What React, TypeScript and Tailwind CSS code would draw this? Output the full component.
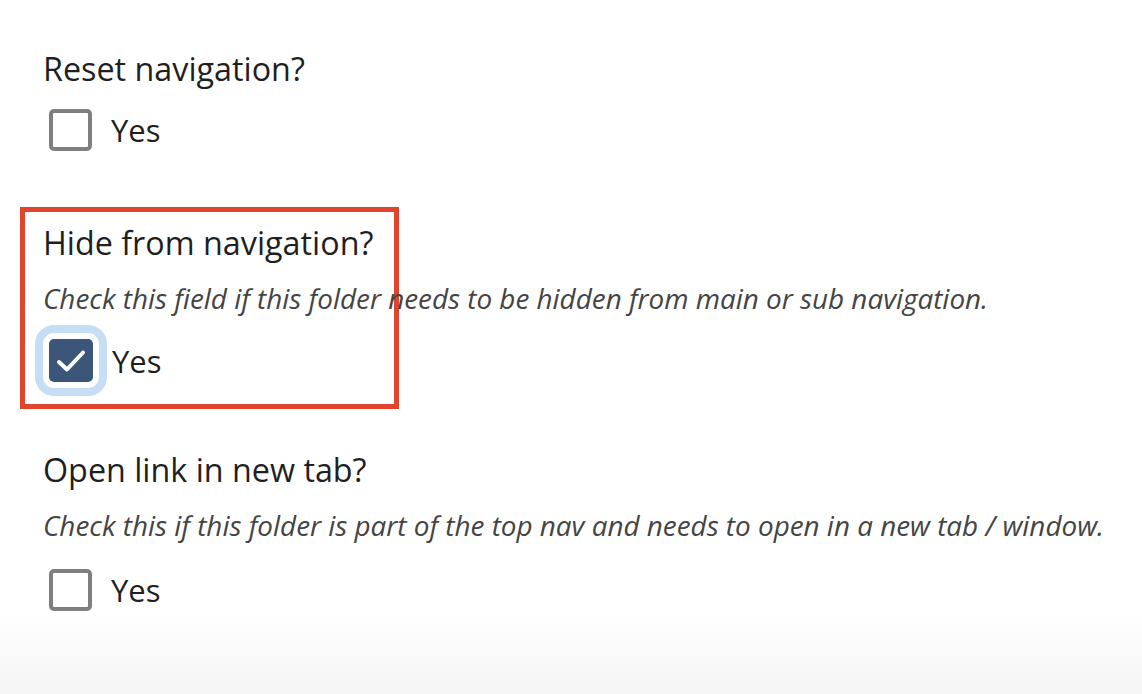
import { useState } from "react";

function Checkbox({ checked, onChange }: { checked: boolean; onChange: () => void }) {
  if (checked) {
    return (
      <button
        onClick={onChange}
        className="w-[44px] h-[43px] rounded-[5px] bg-[#3b5678] flex items-center justify-center outline-[8px] outline-solid outline-[#c6ddf6] outline-offset-[6px] shrink-0"
      >
        <svg width="34" height="30" viewBox="0 0 34 30" fill="none">
          <path d="M5 16 L13 23.5 L29 6.5" stroke="white" strokeWidth="4" strokeLinecap="round" strokeLinejoin="round" />
        </svg>
      </button>
    );
  }
  return (
    <button
      onClick={onChange}
      className="w-[43px] h-[42px] rounded-[5px] border-[4px] border-[#7f7f80] bg-white shrink-0"
    />
  );
}

function Field({
  label,
  help,
  checked,
  onToggle,
  helpGap,
}: {
  label: string;
  help?: string;
  checked: boolean;
  onToggle: () => void;
  helpGap?: string;
}) {
  return (
    <div className="flex flex-col">
      <h2 className="text-[32.3px] leading-[36px] text-[#1f1f1f]">{label}</h2>
      {help && (
        <p className="mt-[23px] text-[27.85px] leading-[30px] italic text-[#444]">{help}</p>
      )}
      <label className={`flex items-center gap-[19px] pl-[6px] ${helpGap ?? "mt-[23px]"}`}>
        <Checkbox checked={checked} onChange={onToggle} />
        <span className="text-[31px] leading-[36px] text-[#1f1f1f]">Yes</span>
      </label>
    </div>
  );
}

export default function App() {
  const [reset, setReset] = useState(false);
  const [hide, setHide] = useState(true);
  const [newTab, setNewTab] = useState(false);

  return (
    <div className="w-[1142px] h-[694px] overflow-hidden bg-linear-to-b from-white from-[88%] to-[#f5f5f5] font-['Open_Sans',sans-serif] pl-[43px] pt-[50px]">
      <Field label="Reset navigation?" checked={reset} onToggle={() => setReset(!reset)} />

      {/* highlighted field */}
      <div className="mt-[56px] ml-[-23px] w-[379px] border-[5px] border-[#e0442c] pl-[18px] pt-[12px] pb-[22px] whitespace-nowrap">
        <Field
          label="Hide from navigation?"
          help="Check this field if this folder needs to be hidden from main or sub navigation."
          checked={hide}
          onToggle={() => setHide(!hide)}
          helpGap="mt-[26px]"
        />
      </div>

      <div className="mt-[42px]">
        <Field
          label="Open link in new tab?"
          help="Check this if this folder is part of the top nav and needs to open in a new tab / window."
          checked={newTab}
          onToggle={() => setNewTab(!newTab)}
          helpGap="mt-[29px]"
        />
      </div>
    </div>
  );
}
